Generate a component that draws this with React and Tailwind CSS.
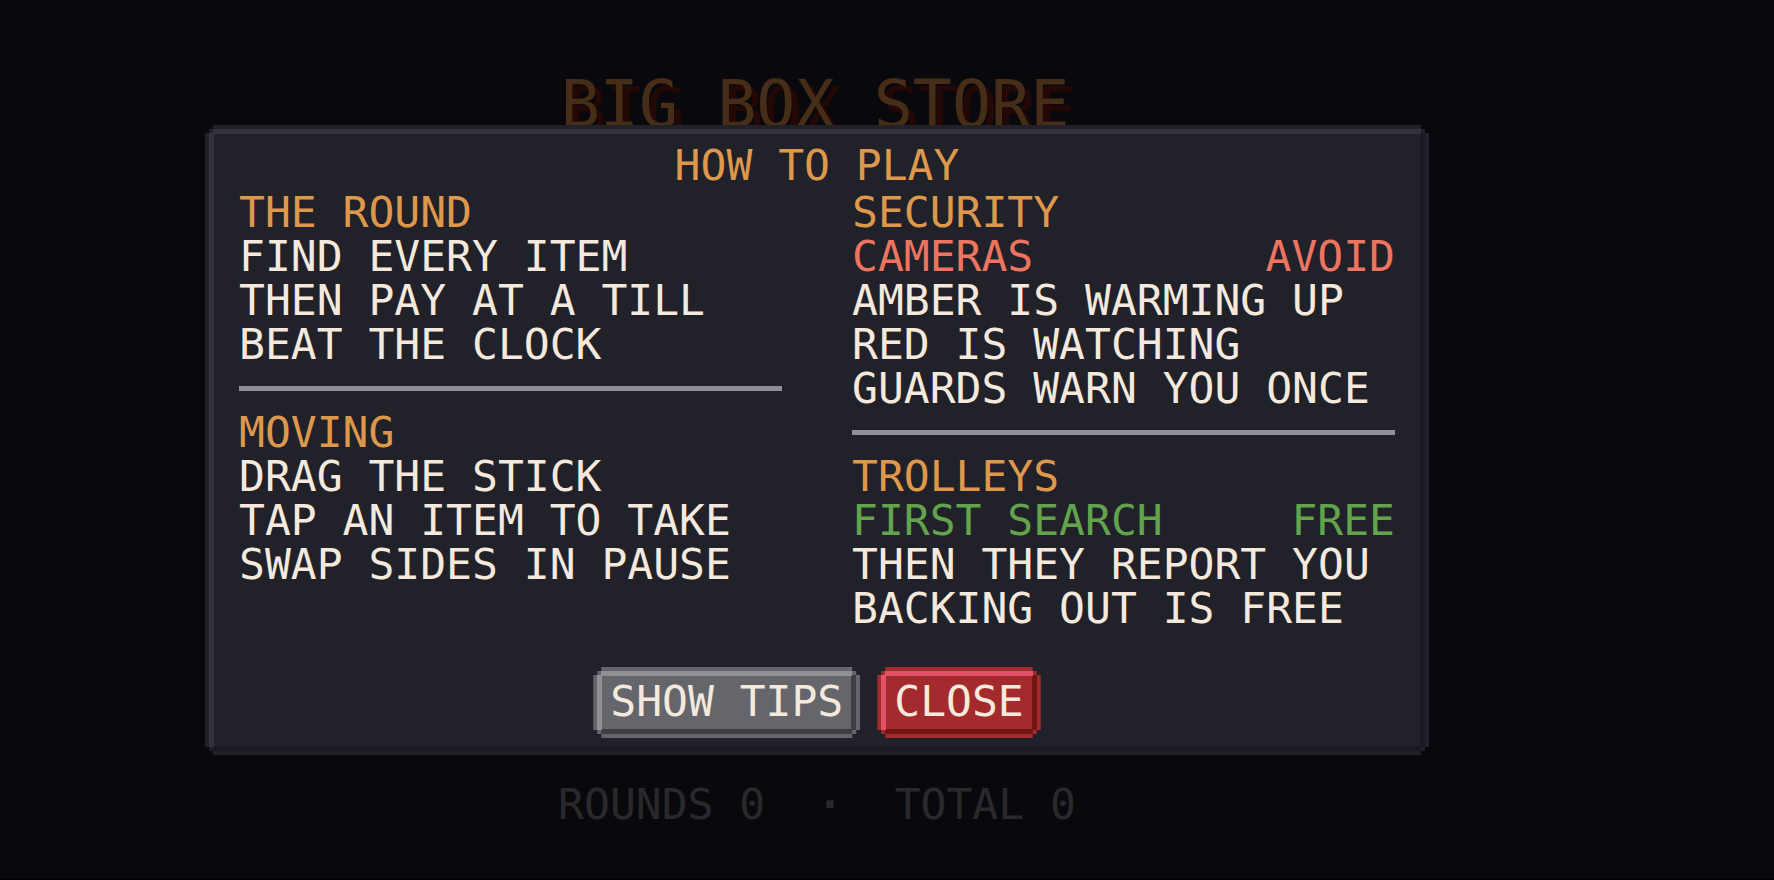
const FRAME =
  "[clip-path:polygon(8px_0,calc(100%-8px)_0,calc(100%-8px)_4px,calc(100%-4px)_4px,calc(100%-4px)_8px,100%_8px,100%_calc(100%-8px),calc(100%-4px)_calc(100%-8px),calc(100%-4px)_calc(100%-4px),calc(100%-8px)_calc(100%-4px),calc(100%-8px)_100%,8px_100%,8px_calc(100%-4px),4px_calc(100%-4px),4px_calc(100%-8px),0_calc(100%-8px),0_8px,4px_8px,4px_4px,8px_4px)]";

const BEVEL_LAYOUT =
  "bg-no-repeat bg-[position:center_top_4px,left_4px_center,center_bottom_4px,right_4px_center] bg-[length:calc(100%-16px)_5px,5px_calc(100%-16px),calc(100%-16px)_5px,5px_calc(100%-16px)]";

function PixelButton({ className, children }) {
  return (
    <button
      type="button"
      className={`px-[17px] pt-3 pb-[15px] leading-[44px] whitespace-nowrap text-[#f4e9dc] ${FRAME} ${BEVEL_LAYOUT} ${className}`}
    >
      {children}
    </button>
  );
}

function Heading({ children }) {
  return <h3 className="text-[#dd984c]">{children}</h3>;
}

function Rule() {
  return (
    <div className="flex h-[44px] items-center">
      <hr className="h-[5px] w-full border-0 bg-[#8f9097]" />
    </div>
  );
}

export default function App() {
  return (
    <div className="flex min-h-screen flex-col items-center overflow-hidden border-b border-black bg-[#09090d] pt-[72px] pr-[140px] font-['DejaVu_Sans_Mono',monospace] text-[43px] leading-[44px] text-[#f4e9dc]">
      <h1 className="h-[53px] pr-1 text-[65px] leading-[65px] whitespace-pre text-[#452d17] [text-shadow:7px_7px_0_#230806]">
        BIG BOX STORE
      </h1>

      <section
        role="dialog"
        aria-labelledby="how-to-play"
        className={`relative flex w-3/4 max-w-[1224px] min-w-[1120px] flex-col bg-[#21212a] bg-[linear-gradient(#32323e,#32323e),linear-gradient(#32323e,#32323e),linear-gradient(#1b1923,#1b1923),linear-gradient(#1b1923,#1b1923)] px-[34px] pt-[18px] pb-[17px] ${FRAME} ${BEVEL_LAYOUT}`}
      >
        <h2 id="how-to-play" className="mb-[3px] text-center text-[#dd984c]">
          HOW TO PLAY
        </h2>

        <div className="grid grid-cols-2 gap-[70px] whitespace-nowrap">
          <div>
            <Heading>THE ROUND</Heading>
            <p>FIND EVERY ITEM</p>
            <p>THEN PAY AT A TILL</p>
            <p>BEAT THE CLOCK</p>
            <Rule />
            <Heading>MOVING</Heading>
            <p>DRAG THE STICK</p>
            <p>TAP AN ITEM TO TAKE</p>
            <p>SWAP SIDES IN PAUSE</p>
          </div>
          <div>
            <Heading>SECURITY</Heading>
            <p className="flex justify-between text-[#ed745f]">
              <span>CAMERAS</span>
              <span>AVOID</span>
            </p>
            <p>AMBER IS WARMING UP</p>
            <p>RED IS WATCHING</p>
            <p>GUARDS WARN YOU ONCE</p>
            <Rule />
            <Heading>TROLLEYS</Heading>
            <p className="flex justify-between text-[#62a34c]">
              <span>FIRST SEARCH</span>
              <span>FREE</span>
            </p>
            <p>THEN THEY REPORT YOU</p>
            <p>BACKING OUT IS FREE</p>
          </div>
        </div>

        <div className="mt-[37px] flex justify-center gap-[17px]">
          <PixelButton className="bg-[#64666b] bg-[linear-gradient(#8e9095,#8e9095),linear-gradient(#8e9095,#8e9095),linear-gradient(#3d3e41,#3d3e41),linear-gradient(#3d3e41,#3d3e41)]">
            SHOW TIPS
          </PixelButton>
          <PixelButton className="bg-[#a42b2d] bg-[linear-gradient(#df5468,#df5468),linear-gradient(#df5468,#df5468),linear-gradient(#711812,#711812),linear-gradient(#711812,#711812)]">
            CLOSE
          </PixelButton>
        </div>
      </section>

      <p className="mt-[27px] whitespace-pre text-[#29292b]">
        {"ROUNDS 0  "}
        <b>·</b>
        {"  TOTAL 0"}
      </p>
    </div>
  );
}
